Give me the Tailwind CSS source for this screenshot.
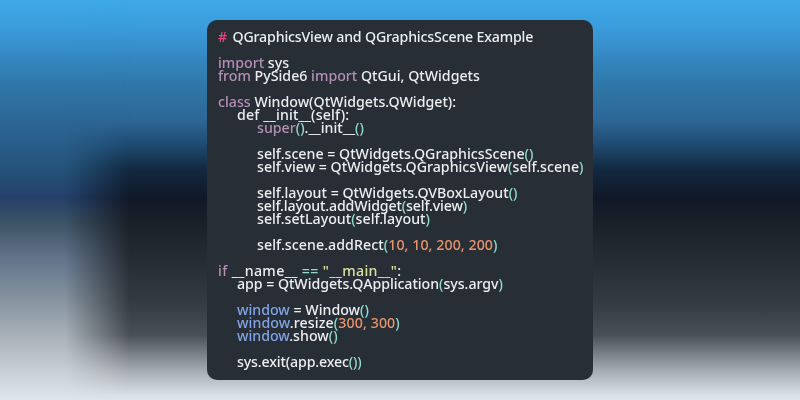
<!DOCTYPE html>
<html lang="en">
<head>
  <meta charset="UTF-8" />
  <title>QGraphicsView and QGraphicsScene Example</title>
  <script src="https://cdn.jsdelivr.net/npm/@tailwindcss/browser@4"></script>
</head>
<body class="overflow-hidden">
  <div class="relative w-[800px] h-[400px] overflow-hidden flex items-center justify-center bg-[linear-gradient(to_bottom,#3fa9e8_0px,#3a9bda_30px,#3589c4_55px,#2f77a8_85px,#2d6797_120px,#1f4a70_145px,#12283f_170px,#111828_198px,#1a2027_222px,#262c33_260px,#363c44_305px,#4a5057_335px,#7d838a_355px,#a8aeb5_372px,#d8e0e8_395px,#dde5ed_400px)]">
    <!-- lighter smear down the left side -->
    <div class="absolute left-0 top-0 w-[130px] h-[400px] [mask-image:linear-gradient(to_right,black_50%,transparent)] bg-[linear-gradient(to_bottom,#3fa9e8_0px,#3a9bda_30px,#3589c4_55px,#2f77a8_85px,#2d6797_120px,#24557c_165px,#25406a_198px,#3c5265_222px,#62738a_258px,#81909c_295px,#a8b0b8_335px,#c8ced5_370px,#dde5ed_400px)]"></div>

    <div class="relative flex flex-col w-[386px] h-[360px] rounded-[10px] bg-[#272e35] pt-[10px] pl-[11px] font-['Noto_Sans',sans-serif] font-medium text-[14.2px] leading-[13px] text-[#eceef0] whitespace-pre blur-[0.4px]">
      <div class="h-[13px] tracking-[-0.18px]"><span class="text-[#e8457f] mr-[2px]">#</span> QGraphicsView and QGraphicsScene Example</div>
      <div class="h-[13px]"></div>
      <div class="h-[13px]"><span class="text-[#b48fb4]">import</span> sys</div>
      <div class="h-[13px]"><span class="text-[#b48fb4]">from</span> PySide6 <span class="text-[#b48fb4]">import</span> QtGui, QtWidgets</div>
      <div class="h-[13px]"></div>
      <div class="h-[13px]"><span class="text-[#b48fb4]">class</span> Window(QtWidgets.QWidget):</div>
      <div class="h-[13px] pl-[19px] tracking-[0.15px]">def __init__(self):</div>
      <div class="h-[13px] pl-[39px]"><span class="text-[#b48fb4]">super</span><span class="text-[#8fd8cc]">()</span>.__init__<span class="text-[#8fd8cc]">()</span></div>
      <div class="h-[13px]"></div>
      <div class="h-[13px] pl-[39px]">self.scene = QtWidgets.QGraphicsScene<span class="text-[#8fd8cc]">()</span></div>
      <div class="h-[13px] pl-[39px]">self.view = QtWidgets.QGraphicsView<span class="text-[#8fd8cc]">(</span>self.scene<span class="text-[#8fd8cc]">)</span></div>
      <div class="h-[13px]"></div>
      <div class="h-[13px] pl-[39px]">self.layout = QtWidgets.QVBoxLayout<span class="text-[#8fd8cc]">()</span></div>
      <div class="h-[13px] pl-[39px] tracking-[-0.15px]">self.layout.addWidget<span class="text-[#8fd8cc]">(</span>self.view<span class="text-[#8fd8cc]">)</span></div>
      <div class="h-[13px] pl-[39px]">self.setLayout<span class="text-[#8fd8cc]">(</span>self.layout<span class="text-[#8fd8cc]">)</span></div>
      <div class="h-[13px]"></div>
      <div class="h-[13px] pl-[39px] tracking-[0.06px]">self.scene.addRect<span class="text-[#8fd8cc]">(</span><span class="text-[#e8946c]">10, 10, 200, 200</span><span class="text-[#8fd8cc]">)</span></div>
      <div class="h-[13px]"></div>
      <div class="h-[13px] tracking-[0.35px]"><span class="text-[#b48fb4]">if</span> __name__ <span class="text-[#8fd8cc]">==</span> <span class="text-[#d8e29c]">"__main__"</span>:</div>
      <div class="h-[13px] pl-[19px] tracking-[-0.05px]">app = QtWidgets.QApplication<span class="text-[#8fd8cc]">(</span>sys.argv<span class="text-[#8fd8cc]">)</span></div>
      <div class="h-[13px]"></div>
      <div class="h-[13px] pl-[19px]"><span class="text-[#82a4e6]">window</span> = Window<span class="text-[#8fd8cc]">()</span></div>
      <div class="h-[13px] pl-[19px] tracking-[0.09px]"><span class="text-[#82a4e6]">window</span>.resize<span class="text-[#8fd8cc]">(</span><span class="text-[#e8946c]">300, 300</span><span class="text-[#8fd8cc]">)</span></div>
      <div class="h-[13px] pl-[19px]"><span class="text-[#82a4e6]">window</span>.show<span class="text-[#8fd8cc]">()</span></div>
      <div class="h-[13px]"></div>
      <div class="h-[13px] pl-[19px] tracking-[-0.15px]">sys.exit(app.exec<span class="text-[#8fd8cc]">())</span></div>
    </div>
  </div>
</body>
</html>
